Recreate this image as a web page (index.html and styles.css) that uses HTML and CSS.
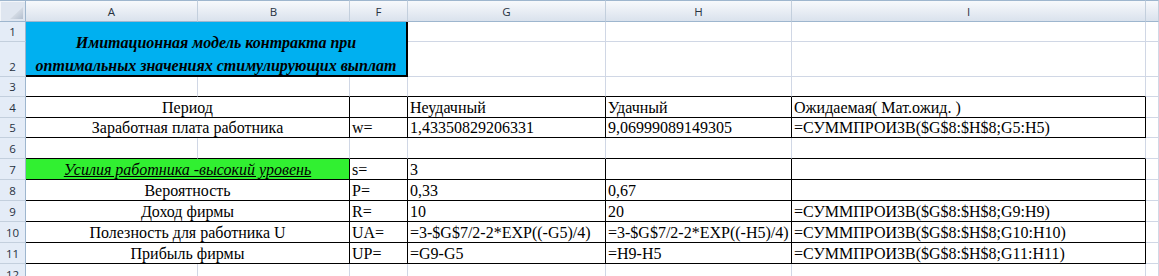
FILE: index.html
```html
<!DOCTYPE html>
<html lang="ru">
<head>
<meta charset="utf-8">
<title>Имитационная модель контракта</title>
<link rel="stylesheet" href="styles.css">
</head>
<body>
<div class="sheet">
  <div class="corner"><svg class="tri" width="13" height="12" viewBox="0 0 13 12"><defs><linearGradient id="g" x1="0" y1="0" x2="1" y2="1"><stop offset="0" stop-color="#f4f6f9"/><stop offset="1" stop-color="#b3bfcf"/></linearGradient></defs><polygon points="13,0 13,12 0,12" fill="url(#g)"/></svg></div>
  <div class="ch">A</div><div class="ch">B</div><div class="ch">F</div><div class="ch">G</div><div class="ch">H</div><div class="ch">I</div><div class="ch"></div>

  <div class="rh">1</div>
  <div class="title"><span>Имитационная модель контракта при</span><span>оптимальных значениях стимулирующих выплат</span></div>
  <div class="c"></div><div class="c"></div><div class="c"></div><div class="c"></div>

  <div class="rh">2</div>
  <div class="c"></div><div class="c"></div><div class="c"></div><div class="c"></div>

  <div class="rh">3</div>
  <div class="c bb"></div><div class="c bb"></div><div class="c bb"></div><div class="c bb"></div><div class="c bb"></div><div class="c bb"></div><div class="c"></div>

  <div class="rh">4</div>
  <div class="c span2 bx ctr">Период</div><div class="c bx"></div><div class="c bx">Неудачный</div><div class="c bx">Удачный</div><div class="c bx">Ожидаемая( Мат.ожид. )</div><div class="c"></div>

  <div class="rh">5</div>
  <div class="c span2 bx ctr">Заработная плата работника</div><div class="c bx">w=</div><div class="c bx">1,43350829206331</div><div class="c bx">9,06999089149305</div><div class="c bx">=СУММПРОИЗВ($G$8:$H$8;G5:H5)</div><div class="c"></div>

  <div class="rh">6</div>
  <div class="c bb"></div><div class="c bb"></div><div class="c bb"></div><div class="c bb"></div><div class="c bb"></div><div class="c bb"></div><div class="c"></div>

  <div class="rh">7</div>
  <div class="c span2 bx ctr green"><span class="effort">Усилия работника -высокий уровень</span></div><div class="c bx">s=</div><div class="c bx">3</div><div class="c bx"></div><div class="c bx"></div><div class="c"></div>

  <div class="rh">8</div>
  <div class="c span2 bx ctr">Вероятность</div><div class="c bx">P=</div><div class="c bx">0,33</div><div class="c bx">0,67</div><div class="c bx"></div><div class="c"></div>

  <div class="rh">9</div>
  <div class="c span2 bx ctr">Доход фирмы</div><div class="c bx">R=</div><div class="c bx">10</div><div class="c bx">20</div><div class="c bx">=СУММПРОИЗВ($G$8:$H$8;G9:H9)</div><div class="c"></div>

  <div class="rh">10</div>
  <div class="c span2 bx ctr">Полезность для работника U</div><div class="c bx">UA=</div><div class="c bx">=3-$G$7/2-2*EXP((-G5)/4)</div><div class="c bx">=3-$G$7/2-2*EXP((-H5)/4)</div><div class="c bx">=СУММПРОИЗВ($G$8:$H$8;G10:H10)</div><div class="c"></div>

  <div class="rh">11</div>
  <div class="c span2 bx ctr">Прибыль фирмы</div><div class="c bx">UP=</div><div class="c bx">=G9-G5</div><div class="c bx">=H9-H5</div><div class="c bx">=СУММПРОИЗВ($G$8:$H$8;G11:H11)</div><div class="c"></div>

  <div class="rh">12</div>
  <div class="c"></div><div class="c"></div><div class="c"></div><div class="c"></div><div class="c"></div><div class="c"></div><div class="c"></div>
</div>
</body>
</html>
```
FILE: styles.css
```css
* { box-sizing: border-box; }

html, body {
  margin: 0;
  padding: 0;
  background: #ffffff;
  overflow: hidden;
}

.sheet {
  display: grid;
  grid-template-columns: 26px 172px 152px 58px 198px 186px 354px 1fr;
  grid-template-rows: 22px 20px 35px 20px 21px 20px 21px 21px 21px 21px 21px 21px 21px;
  width: 1159px;
  height: 276px;
  overflow: hidden;
  font-family: "Liberation Serif", "Times New Roman", serif;
  font-size: 16px;
  color: #000;
}

.corner {
  background: #dfe6f0;
  border-top: 1px solid #9eb6ce;
  border-right: 1px solid #9eb6ce;
  border-bottom: 1px solid #9eb6ce;
  box-shadow: inset 1px 1px 0 #f3f6fa;
  display: flex;
  align-items: flex-end;
  justify-content: flex-end;
  padding: 0 2px 2px 0;
}

.tri { display: block; }

.ch {
  border-top: 1px solid #9eb6ce;
  border-right: 1px solid #c3cfdd;
  border-bottom: 1px solid #9eb6ce;
  background: linear-gradient(#f7f9fc, #dae2ed);
  display: flex;
  align-items: center;
  justify-content: center;
  padding-top: 1px;
  font-family: "Open Sans", "Noto Sans", sans-serif;
  font-size: 11.5px;
  color: #27313f;
}

.rh {
  background: #e4ecf7;
  border-right: 1px solid #9eb6ce;
  border-bottom: 1px solid #c3cfdd;
  display: flex;
  align-items: flex-end;
  justify-content: center;
  line-height: 19px;
  font-family: "Open Sans", "Noto Sans", sans-serif;
  font-size: 11.5px;
  color: #27313f;
}

.c {
  border-right: 1px solid #d0d7e5;
  border-bottom: 1px solid #d0d7e5;
  display: flex;
  align-items: flex-end;
  padding: 0 2px;
  line-height: 18px;
  white-space: nowrap;
  min-width: 0;
}

.ctr { justify-content: center; }

.span2 { grid-column: span 2; }

.bx {
  border-right-color: #000;
  border-bottom-color: #000;
}

.bb { border-bottom-color: #000; }

.title {
  grid-column: 2 / 5;
  grid-row: 2 / 4;
  background: #00b0f0;
  border-right: 2px solid #000;
  border-bottom: 2px solid #000;
  display: flex;
  flex-direction: column;
  justify-content: flex-end;
  align-items: center;
  gap: 5px;
  font-weight: bold;
  font-style: italic;
  font-size: 16px;
  line-height: 18px;
  white-space: nowrap;
  padding: 0 2px;
}

.green { background: #31f031; }

.effort {
  font-style: italic;
  text-decoration: underline;
}
```
